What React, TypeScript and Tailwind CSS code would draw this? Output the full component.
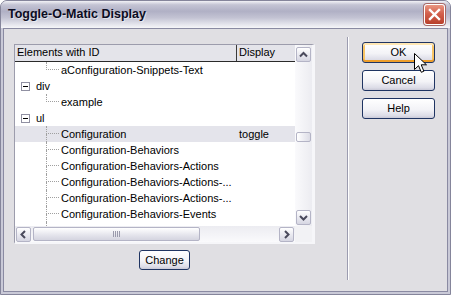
import React from "react";

type TreeRow = {
  label: string;
  level: 0 | 1;
  display?: string;
  continues?: boolean;
  selected?: boolean;
};

const rows: TreeRow[] = [
  { label: "aConfiguration-Snippets-Text", level: 1 },
  { label: "div", level: 0 },
  { label: "example", level: 1 },
  { label: "ul", level: 0 },
  { label: "Configuration", level: 1, display: "toggle", continues: true, selected: true },
  { label: "Configuration-Behaviors", level: 1, continues: true },
  { label: "Configuration-Behaviors-Actions", level: 1, continues: true },
  { label: "Configuration-Behaviors-Actions-...", level: 1, continues: true },
  { label: "Configuration-Behaviors-Actions-...", level: 1, continues: true },
  { label: "Configuration-Behaviors-Events", level: 1, continues: true },
  { label: "", level: 1, continues: true },
];

const chevrons = {
  up: "M3 8.5 L6.5 5 L10 8.5",
  down: "M3 5 L6.5 8.5 L10 5",
  left: "M8 3 L4.5 6.5 L8 10",
  right: "M5 3 L8.5 6.5 L5 10",
};

const ScrollButton = ({ dir }: { dir: keyof typeof chevrons }) => (
  <div className="flex h-[15px] w-[15px] shrink-0 items-center justify-center rounded-[2px] border border-[#b4b4c6] bg-[linear-gradient(to_bottom,#ffffff,#e6e6ee_60%,#d6d6e2)]">
    <svg width="13" height="13" viewBox="0 0 13 13">
      <path d={chevrons[dir]} stroke="#4a4a5c" strokeWidth="2" fill="none" />
    </svg>
  </div>
);

const TreeLine = ({ row }: { row: TreeRow }) => (
  <div
    className={`flex h-[16px] shrink-0 items-center ${row.selected ? "bg-[#e4e4eb]" : ""}`}
  >
    <div className="flex h-full w-[222px] shrink-0 items-center">
      {row.level === 0 ? (
        <>
          <div className="ml-[6px] mt-[4px] flex h-[9px] w-[9px] items-center justify-center self-start border border-[#9090a2] bg-white">
            <div className="h-px w-[5px] bg-black" />
          </div>
          <span className="ml-[6px]">{row.label}</span>
        </>
      ) : (
        <>
          <div className="ml-[31px] flex h-full w-[13px] shrink-0 flex-col">
            <div className="h-[8px] border-b border-l border-dotted border-[#a0a0a0]" />
            <div
              className={`h-[8px] ${row.continues ? "border-l border-dotted border-[#a0a0a0]" : ""}`}
            />
          </div>
          <span className="ml-[2px] whitespace-nowrap">{row.label}</span>
        </>
      )}
    </div>
    <span className="pl-[2px]">{row.display}</span>
  </div>
);

const DialogButton = ({
  label,
  hot,
  className = "",
}: {
  label: string;
  hot?: boolean;
  className?: string;
}) => (
  <button
    className={`flex items-center justify-center rounded-[3px] border border-[#1f3462] bg-[linear-gradient(to_bottom,#ffffff,#f3f3f7_55%,#dcdce7_88%,#c9c9d7)] text-[11px] text-black ${
      hot
        ? "shadow-[inset_0_2px_0_#ffe7b4,inset_0_-2px_0_#ee9e2a,inset_2px_0_0_#f8c566,inset_-2px_0_0_#f8c566]"
        : ""
    } ${className}`}
  >
    {label}
  </button>
);

export default function App() {
  return (
    <div className="relative flex h-[295px] w-[451px] flex-col overflow-hidden rounded-t-[7px] border border-[#85859b] bg-[#c9c9d7] font-['Liberation_Sans',Arial,sans-serif] text-[11px] text-black">
      {/* title bar */}
      <div className="flex h-[27px] shrink-0 items-center justify-between bg-[linear-gradient(to_bottom,#f2f2f6_0%,#c4c4d4_14%,#b0b0c5_38%,#c3c3d3_62%,#e4e4ec_86%,#f6f6f9_100%)] pl-[7px] pr-[5px]">
        <span className="text-[12.5px] font-bold text-[#0c0c22] [text-shadow:1px_1px_0_rgba(255,255,255,0.5)]">
          Toggle-O-Matic Display
        </span>
        <div className="flex h-[21px] w-[21px] items-center justify-center rounded-[3px] border border-white bg-[linear-gradient(to_bottom,#e99682,#d3604c_45%,#b8402c)] shadow-[0_0_0_1px_#a86a68]">
          <svg width="13" height="13" viewBox="0 0 13 13">
            <path d="M2 2 L11 11 M11 2 L2 11" stroke="white" strokeWidth="2.4" strokeLinecap="square" />
          </svg>
        </div>
      </div>

      {/* window body */}
      <div className="flex flex-1 px-[2px] pb-[2px]">
        <div className="flex flex-1 border border-[#8a8aa2] bg-[#e0dfe3]">
          <div className="flex flex-col items-center pl-[10px] pt-[15px]">
            <div className="flex h-[200px] w-[301px] flex-col border-l border-t border-r-[3px] border-b-[2px] border-l-[#9c9cac] border-t-[#9c9cac] border-r-[#f6f6f9] border-b-[#f6f6f9] bg-white">
              <div className="flex h-[181px]">
                <div className="flex w-[280px] flex-col overflow-hidden">
                  <div className="flex h-[17px] shrink-0 border-b border-[#2a2a2a] bg-[#e4e4ea] leading-[15px]">
                    <div className="w-[222px] shrink-0 border-r border-[#3a3a3a] pl-[2px]">
                      Elements with ID
                    </div>
                    <div className="pl-[2px]">Display</div>
                  </div>
                  {rows.map((row, i) => (
                    <TreeLine key={i} row={row} />
                  ))}
                </div>
                <div className="flex w-[17px] flex-col bg-[linear-gradient(to_right,#fafafc,#ececf1)] px-[1px] pt-[2px] pb-[1px]">
                  <ScrollButton dir="up" />
                  <div className="h-[70px]" />
                  <div className="h-[10px] rounded-[2px] border border-[#b4b4c6] bg-[linear-gradient(to_right,#ffffff,#dcdce6)]" />
                  <div className="flex-1" />
                  <ScrollButton dir="down" />
                </div>
              </div>
              <div className="flex h-[16px]">
                <div className="flex w-[280px] bg-[linear-gradient(to_bottom,#ececf1,#fafafc)] p-[1px]">
                  <ScrollButton dir="left" />
                  <div className="ml-[2px] flex w-[167px] items-center justify-center rounded-[2px] border border-[#b4b4c6] bg-[linear-gradient(to_bottom,#ffffff,#e4e4ec_60%,#d4d4e0)]">
                    <div className="flex gap-[1px]">
                      <div className="h-[6px] w-px bg-[#9a9aac]" />
                      <div className="h-[6px] w-px bg-[#9a9aac]" />
                      <div className="h-[6px] w-px bg-[#9a9aac]" />
                      <div className="h-[6px] w-px bg-[#9a9aac]" />
                    </div>
                  </div>
                  <div className="flex-1" />
                  <ScrollButton dir="right" />
                </div>
                <div className="w-[17px] bg-[#f2f2f5]" />
              </div>
            </div>
            <DialogButton label="Change" className="mt-[6px] h-[20px] w-[51px]" />
          </div>

          <div className="mb-[11px] ml-[32px] mt-[8px] w-[2px] border-l border-[#9c9cb0] bg-white" />

          <div className="ml-[13px] mt-[13px] flex flex-col gap-[7px]">
            <DialogButton label="OK" hot className="h-[21px] w-[73px]" />
            <DialogButton label="Cancel" className="h-[21px] w-[73px]" />
            <DialogButton label="Help" className="h-[21px] w-[73px]" />
          </div>
        </div>
      </div>

      {/* mouse pointer over OK */}
      <svg
        className="absolute left-[413px] top-[52px]"
        width="14"
        height="22"
        viewBox="0 0 14 22"
      >
        <path
          d="M0.5 0.5 L0.5 16.5 L4.5 12.7 L7.3 19.3 L9.9 18.2 L7.2 11.8 L12.5 11.8 Z"
          fill="white"
          stroke="black"
          strokeWidth="1"
          strokeLinejoin="miter"
        />
      </svg>
    </div>
  );
}
